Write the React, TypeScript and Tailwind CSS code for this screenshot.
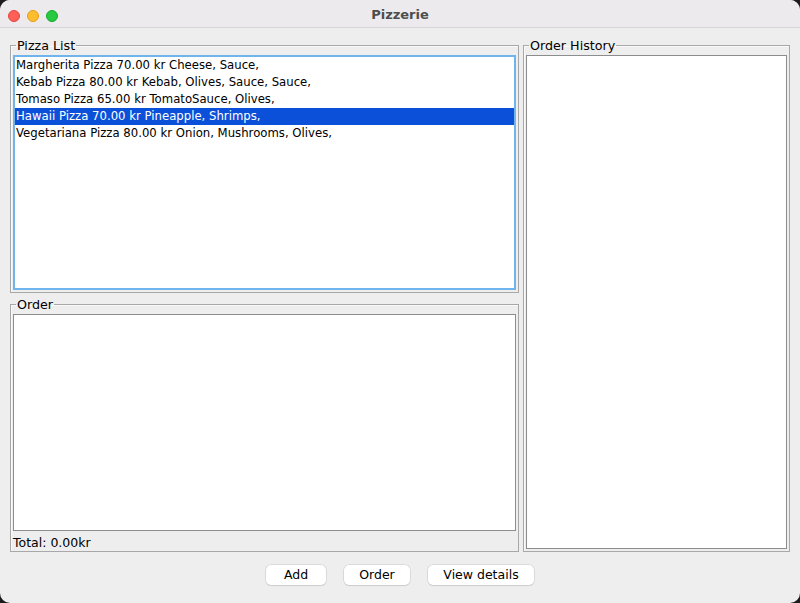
const pizzas = [
  "Margherita Pizza 70.00 kr Cheese, Sauce,",
  "Kebab Pizza 80.00 kr Kebab, Olives, Sauce, Sauce,",
  "Tomaso Pizza 65.00 kr TomatoSauce, Olives,",
  "Hawaii Pizza 70.00 kr Pineapple, Shrimps,",
  "Vegetariana Pizza 80.00 kr Onion, Mushrooms, Olives,",
];

const font = { fontFamily: '"DejaVu Sans", "Liberation Sans", sans-serif' };

const Group = ({ title, className, children }: { title: string; className: string; children: React.ReactNode }) => (
  <fieldset className={`flex flex-col border border-[#a8a8a8] px-[2px] pb-[2px] shadow-[inset_1px_1px_0_#fafafa] ${className}`}>
    <legend className="ml-[3px] px-[1px] text-[12.7px] leading-[15px] text-black">{title}</legend>
    {children}
  </fieldset>
);

const Button = ({ label, width }: { label: string; width: string }) => (
  <button className={`h-[20px] ${width} rounded-[5px] bg-white text-[12.5px] text-black shadow-[0_0_0_0.5px_#c8c8c8,0_1px_1px_rgba(0,0,0,0.12)]`}>
    {label}
  </button>
);

const App = () => {
  return (
    <div className="w-[800px] h-[603px] bg-[#1c1c1e]" style={font}>
      <div className="flex flex-col w-full h-full rounded-[10px] overflow-hidden bg-[#eeeeee]">
        <div className="relative flex items-center justify-center h-[28px] pt-[3px] shrink-0 bg-[#eceaed] border-b border-[#d6d6d6]">
          <div className="absolute left-[8px] top-[10px] flex gap-[7px]">
            <span className="w-[12px] h-[12px] rounded-full bg-[#fe5f57] border border-[#e2463f]" />
            <span className="w-[12px] h-[12px] rounded-full bg-[#febc2e] border border-[#e1a116]" />
            <span className="w-[12px] h-[12px] rounded-full bg-[#28c840] border border-[#12ac28]" />
          </div>
          <span className="text-[13px] font-bold text-[#4d4d4d]">Pizzerie</span>
        </div>

        <div className="flex gap-[4px] pl-[10px] pt-[10px]">
          <div className="flex flex-col gap-[4px] w-[509px]">
            <Group title="Pizza List" className="h-[255px]">
              <div className="mt-[2px] h-[235px] border-2 border-[#70b4ee] bg-white">
                {pizzas.map((p, i) => (
                  <div
                    key={p}
                    className={`h-[17px] pl-[1px] text-[11.7px] leading-[17px] ${i === 3 ? "bg-[#0b50d8] text-white" : "text-black"}`}
                  >
                    {p}
                  </div>
                ))}
              </div>
            </Group>
            <Group title="Order" className="h-[255px]">
              <div className="mt-[2px] h-[217px] border border-[#8d8d8d] bg-white" />
              <div className="pt-[4px] text-[12.5px] leading-[15px] text-black">Total: 0.00kr</div>
            </Group>
          </div>
          <div className="w-[267px]">
            <Group title="Order History" className="h-[514px]">
              <div className="mt-[2px] h-[494px] border border-[#8d8d8d] bg-white" />
            </Group>
          </div>
        </div>

        <div className="flex justify-center gap-[18px] pt-[13px]">
          <Button label="Add" width="w-[60px]" />
          <Button label="Order" width="w-[66px]" />
          <Button label="View details" width="w-[106px]" />
        </div>
      </div>
    </div>
  );
};

export default App;
